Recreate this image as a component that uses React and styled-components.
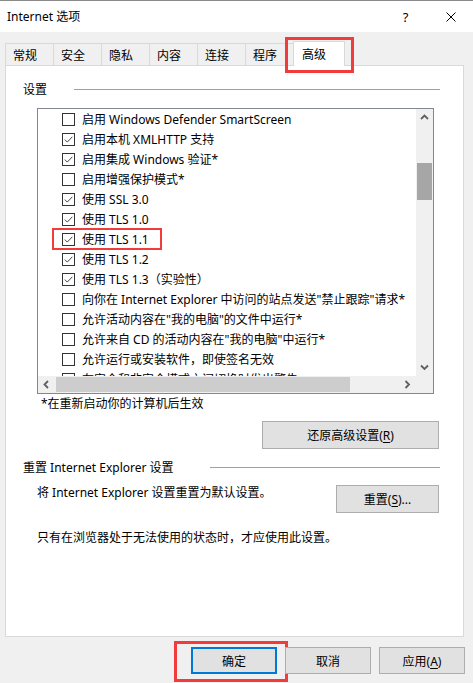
import React from 'react';
import styled, { createGlobalStyle, css } from 'styled-components';

const FONT = `"Noto Sans", "Noto Sans CJK SC", sans-serif`;
const RED = '#f23c3c';

const GlobalStyle = createGlobalStyle`
  html, body {
    margin: 0;
    padding: 0;
    background: #f0f0f0;
  }
  body {
    font-family: ${FONT};
    font-size: 12px;
    color: #000;
  }
  *, *::before, *::after {
    box-sizing: border-box;
  }
`;

const Window = styled.div`
  width: 473px;
  height: 683px;
  background: #f0f0f0;
  display: flex;
  flex-direction: column;
  overflow: hidden;
`;

const TitleBar = styled.div`
  height: 32px;
  background: #fff;
  border-top: 1px solid #8a8a8a;
  display: flex;
  align-items: center;
  padding-left: 7px;
`;

const Title = styled.div`
  flex: 1;
  line-height: 20px;
`;

const TitleButton = styled.div`
  width: 45px;
  height: 31px;
  display: flex;
  align-items: center;
  justify-content: center;
  font-size: 13px;
`;

const TabStrip = styled.div`
  display: flex;
  align-items: flex-start;
  height: 22px;
  margin-top: 11px;
  padding-left: 5px;
  position: relative;
  z-index: 1;
`;

const Tab = styled.div`
  width: 49px;
  height: 22px;
  margin-right: -1px;
  padding-left: 7px;
  display: flex;
  align-items: center;
  border: 1px solid #d9d9d9;
  border-bottom: none;
  background: #f0f0f0;
  position: relative;

  ${({ $active }) =>
    $active &&
    css`
      width: 52px;
      height: 25px;
      margin-top: -2px;
      padding-left: 8px;
      background: #fff;
      z-index: 2;

      &::after {
        content: '';
        position: absolute;
        left: -9px;
        top: -5px;
        width: 69px;
        height: 36px;
        border: 3px solid ${RED};
      }
    `}
`;

const Panel = styled.div`
  height: 572px;
  margin: 0 9px 0 5px;
  background: #fff;
  border: 1px solid #d9d9d9;
  padding: 13px 23px 0 17px;
  display: flex;
  flex-direction: column;
`;

const GroupHeader = styled.div`
  display: grid;
  grid-template-columns: ${({ $lineStart }) => $lineStart}px 1fr;
  align-items: center;
  height: 20px;
  margin-top: ${({ $top }) => $top || 0}px;
`;

const GroupLine = styled.div`
  height: 1px;
  background: #a0a0a0;
`;

const ListBox = styled.div`
  width: 397px;
  height: 286px;
  margin: 9px 0 0 14px;
  border: 1px solid #828790;
  background: #fff;
  display: grid;
  grid-template-columns: 1fr 17px;
  grid-template-rows: 1fr 17px;
`;

const ListContent = styled.div`
  overflow: hidden;
`;

const Row = styled.div`
  height: 20px;
  display: flex;
  align-items: center;
  padding-left: 24px;
  white-space: nowrap;
  position: relative;

  ${({ $marked }) =>
    $marked &&
    css`
      &::after {
        content: '';
        position: absolute;
        left: 14px;
        top: -1px;
        width: 110px;
        height: 22px;
        border: 2px solid ${RED};
      }
    `}
`;

const Check = styled.span`
  width: 13px;
  height: 13px;
  flex: none;
  border: 1px solid #333;
  background: #fff;
  margin-right: 7px;
  display: flex;
  align-items: center;
  justify-content: center;
`;

const VScroll = styled.div`
  background: #f0f0f0;
  display: flex;
  flex-direction: column;
`;

const HScroll = styled.div`
  background: #f0f0f0;
  display: flex;
  align-items: center;
`;

const ArrowButton = styled.div`
  width: 17px;
  height: 17px;
  flex: none;
  display: flex;
  align-items: center;
  justify-content: center;
`;

const Track = styled.div`
  flex: 1;
  display: flex;
  flex-direction: ${({ $vertical }) => ($vertical ? 'column' : 'row')};
  align-self: stretch;
`;

const Thumb = styled.div`
  background: ${({ $color }) => $color};
  ${({ $vertical, $offset, $size }) =>
    $vertical
      ? css`
          margin: ${$offset}px 1px 0;
          height: ${$size}px;
        `
      : css`
          margin: 1px 0 1px ${$offset}px;
          width: ${$size}px;
        `}
`;

const Corner = styled.div`
  background: #f0f0f0;
`;

const Note = styled.div`
  line-height: 20px;
  margin-left: 18px;
`;

const Button = styled.button`
  width: ${({ $width }) => $width}px;
  height: ${({ $height }) => $height || 28}px;
  padding: 0;
  border: 1px solid #adadad;
  background: #e1e1e1;
  font-family: ${FONT};
  font-size: 12px;
  color: #000;
  flex: none;
  position: relative;

  u {
    text-decoration-thickness: 1px;
    text-underline-offset: 2px;
  }

  ${({ $default }) =>
    $default &&
    css`
      border: 2px solid #0078d7;

      &::after {
        content: '';
        position: absolute;
        left: -19px;
        top: -8px;
        width: 114px;
        height: 41px;
        border: 3px solid ${RED};
      }
    `}
`;

const RestoreButton = styled(Button)`
  align-self: flex-end;
  margin: 7px 1px 0 0;
`;

const ResetRow = styled.div`
  display: flex;
  justify-content: space-between;
  align-items: flex-start;
  margin-top: 6px;
  padding-left: 14px;
  padding-right: 1px;

  ${Button} {
    margin-top: 2px;
  }
`;

const Text = styled.div`
  line-height: 20px;
`;

const Hint = styled(Text)`
  margin: 15px 0 0 14px;
`;

const Footer = styled.div`
  display: flex;
  justify-content: flex-end;
  gap: 8px;
  padding: 10px 8px 0 0;
`;

const Chevron = ({ dir }) => {
  const paths = {
    up: 'M1 5 L4.5 1.5 L8 5',
    down: 'M1 1.5 L4.5 5 L8 1.5',
    left: 'M5 1 L1.5 4.5 L5 8',
    right: 'M1.5 1 L5 4.5 L1.5 8',
  };
  const vertical = dir === 'up' || dir === 'down';
  return (
    <svg width={vertical ? 9 : 7} height={vertical ? 7 : 9} viewBox={vertical ? '0 0 9 7' : '0 0 7 9'}>
      <path d={paths[dir]} fill="none" stroke="#606060" strokeWidth="1.8" />
    </svg>
  );
};

const CheckMark = () => (
  <svg width="11" height="11" viewBox="0 0 11 11">
    <path d="M1.8 5.6 L4.3 8.1 L9.3 2.8" fill="none" stroke="#444" strokeWidth="1" />
  </svg>
);

const tabs = ['常规', '安全', '隐私', '内容', '连接', '程序', '高级'];

const options = [
  { label: '启用 Windows Defender SmartScreen', checked: false },
  { label: '启用本机 XMLHTTP 支持', checked: true },
  { label: '启用集成 Windows 验证*', checked: true },
  { label: '启用增强保护模式*', checked: false },
  { label: '使用 SSL 3.0', checked: true },
  { label: '使用 TLS 1.0', checked: true },
  { label: '使用 TLS 1.1', checked: true, marked: true },
  { label: '使用 TLS 1.2', checked: true },
  { label: '使用 TLS 1.3（实验性）', checked: true },
  { label: '向你在 Internet Explorer 中访问的站点发送"禁止跟踪"请求*', checked: false },
  { label: '允许活动内容在"我的电脑"的文件中运行*', checked: false },
  { label: '允许来自 CD 的活动内容在"我的电脑"中运行*', checked: false },
  { label: '允许运行或安装软件，即使签名无效', checked: false },
  { label: '在安全和非安全模式之间切换时发出警告', checked: false },
];

const App = () => (
  <>
    <GlobalStyle />
    <Window>
      <TitleBar>
        <Title>Internet 选项</Title>
        <TitleButton>?</TitleButton>
        <TitleButton>
          <svg width="10" height="10" viewBox="0 0 10 10">
            <path d="M0.5 0.5 L9.5 9.5 M9.5 0.5 L0.5 9.5" stroke="#000" strokeWidth="1" />
          </svg>
        </TitleButton>
      </TitleBar>

      <TabStrip>
        {tabs.map((tab) => (
          <Tab key={tab} $active={tab === '高级'}>
            {tab}
          </Tab>
        ))}
      </TabStrip>

      <Panel>
        <GroupHeader $lineStart={51}>
          <span>设置</span>
          <GroupLine />
        </GroupHeader>

        <ListBox>
          <ListContent>
            {options.map((opt) => (
              <Row key={opt.label} $marked={opt.marked}>
                <Check>{opt.checked && <CheckMark />}</Check>
                {opt.label}
              </Row>
            ))}
          </ListContent>
          <VScroll>
            <ArrowButton>
              <Chevron dir="up" />
            </ArrowButton>
            <Track $vertical>
              <Thumb $vertical $color="#a6a6a6" $offset={37} $size={37} />
            </Track>
            <ArrowButton>
              <Chevron dir="down" />
            </ArrowButton>
          </VScroll>
          <HScroll>
            <ArrowButton>
              <Chevron dir="left" />
            </ArrowButton>
            <Track>
              <Thumb $color="#cdcdcd" $offset={1} $size={294} />
            </Track>
            <ArrowButton>
              <Chevron dir="right" />
            </ArrowButton>
          </HScroll>
          <Corner />
        </ListBox>

        <Note>*在重新启动你的计算机后生效</Note>

        <RestoreButton $width={177}>
          还原高级设置(<u>R</u>)
        </RestoreButton>

        <GroupHeader $lineStart={187} $top={8}>
          <span>重置 Internet Explorer 设置</span>
          <GroupLine />
        </GroupHeader>

        <ResetRow>
          <Text>将 Internet Explorer 设置重置为默认设置。</Text>
          <Button $width={103}>
            重置(<u>S</u>)...
          </Button>
        </ResetRow>

        <Hint>只有在浏览器处于无法使用的状态时，才应使用此设置。</Hint>
      </Panel>

      <Footer>
        <Button $width={86} $height={27} $default>
          确定
        </Button>
        <Button $width={86} $height={27}>
          取消
        </Button>
        <Button $width={86} $height={27}>
          应用(<u>A</u>)
        </Button>
      </Footer>
    </Window>
  </>
);

export default App;
